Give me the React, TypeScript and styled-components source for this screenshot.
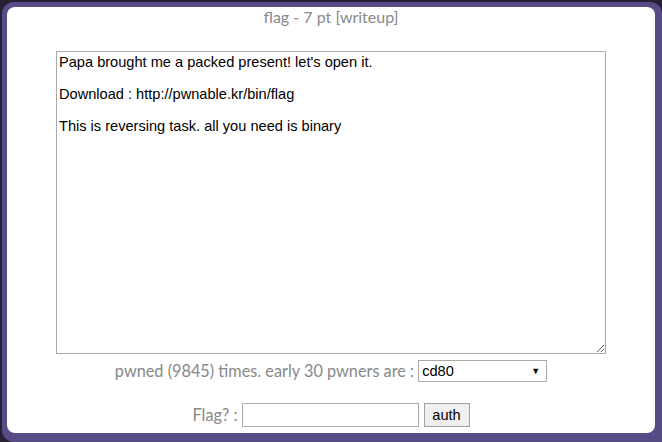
import React from 'react';
import styled, { createGlobalStyle } from 'styled-components';

const GlobalStyle = createGlobalStyle`
    html, body {
        margin: 0;
        padding: 0;
        background: #2a2035;
        overflow: hidden;
    }
`;

const Frame = styled.div`
    margin: 2px 0 0 2px;
    padding: 5px 7px 9px 5px;
    width: 648px;
    background: #574c85;
    border-radius: 12px 12px 0 12px;
`;

const Panel = styled.div`
    height: 426px;
    background: #ffffff;
    border-radius: 8px;
    display: flex;
    flex-direction: column;
    align-items: center;
    font-family: Lato, "Liberation Sans", sans-serif;
    color: #888888;
`;

const Title = styled.div`
    font-size: 16px;
    line-height: 20px;
`;

const Description = styled.textarea`
    box-sizing: border-box;
    margin: 24px 0 0 0;
    width: 550px;
    height: 303px;
    padding: 2px 2px;
    border: 1px solid #a9a9a9;
    font-family: Arial, "Liberation Sans", sans-serif;
    font-size: 14.6px;
    line-height: 16px;
    color: #000;
    outline: none;
`;

const Row = styled.div<{ $top: number }>`
    display: flex;
    align-items: center;
    margin-top: ${p => p.$top}px;
    font-size: 16.3px;
`;

const Label = styled.span`
    line-height: 20px;
    margin-right: 4px;
`;

const SelectBox = styled.div`
    box-sizing: border-box;
    width: 129px;
    height: 22px;
    border: 1px solid #a9a9a9;
    display: flex;
    align-items: center;
    justify-content: space-between;
    padding: 0 6px 0 3px;
    font-family: Arial, "Liberation Sans", sans-serif;
    font-size: 14.6px;
    color: #000;
`;

const Arrow = styled.span`
    font-size: 9px;
`;

const FlagInput = styled.input`
    box-sizing: border-box;
    width: 177px;
    height: 24px;
    margin: 0 5px 0 0;
    border: 1px solid #a9a9a9;
    padding: 0 3px;
    outline: none;
`;

const AuthButton = styled.button`
    box-sizing: border-box;
    width: 46px;
    height: 24px;
    margin: 0;
    border: 1px solid #a0a0a0;
    background: #efefef;
    font-family: Arial, "Liberation Sans", sans-serif;
    font-size: 14.6px;
    color: #000;
    padding: 0;
`;

const text = `Papa brought me a packed present! let's open it.

Download : http://pwnable.kr/bin/flag

This is reversing task. all you need is binary`;

const App: React.FC = () => {
    return (
        <>
            <GlobalStyle />
            <Frame>
                <Panel>
                    <Title>flag - 7 pt [writeup]</Title>
                    <Description defaultValue={text} />
                    <Row $top={6}>
                        <Label>pwned (9845) times. early 30 pwners are :</Label>
                        <SelectBox>
                            <span>cd80</span>
                            <Arrow>▼</Arrow>
                        </SelectBox>
                    </Row>
                    <Row $top={21}>
                        <Label>Flag? :</Label>
                        <FlagInput />
                        <AuthButton>auth</AuthButton>
                    </Row>
                </Panel>
            </Frame>
        </>
    );
};

export default App;
